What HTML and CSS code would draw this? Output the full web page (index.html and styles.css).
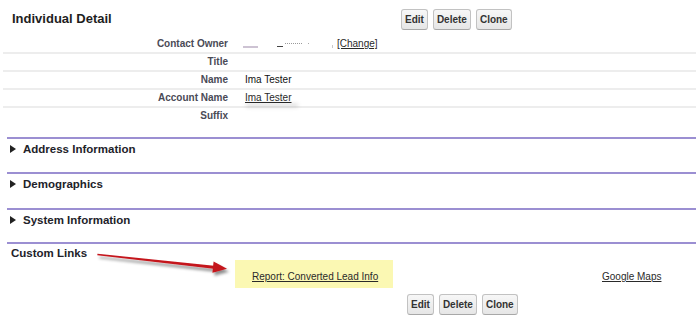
FILE: index.html
```html
<!DOCTYPE html>
<html lang="en">
<head>
<meta charset="utf-8">
<title>Individual Detail</title>
<link rel="stylesheet" href="styles.css">
</head>
<body>
<div class="page">
  <div class="pb-header">
    <h2 class="pb-title">Individual Detail</h2>
    <div class="btns">
      <button class="btn">Edit</button>
      <button class="btn">Delete</button>
      <button class="btn">Clone</button>
    </div>
  </div>

  <div class="detail">
    <div class="row">
      <div class="label">Contact Owner</div>
      <div class="value owner">
        <span class="rd rd1"></span><span class="rd rd2"></span><span class="rd rd3"></span><span class="rd rd4"></span><span class="rd rd5"></span><a class="lnk change" href="#">[Change]</a>
      </div>
    </div>
    <div class="row">
      <div class="label">Title</div>
      <div class="value"></div>
    </div>
    <div class="row">
      <div class="label">Name</div>
      <div class="value">Ima Tester</div>
    </div>
    <div class="row">
      <div class="label">Account Name</div>
      <div class="value"><a class="lnk acct" href="#">Ima Tester</a></div>
    </div>
    <div class="row last">
      <div class="label">Suffix</div>
      <div class="value"></div>
    </div>
  </div>

  <div class="section s1">
    <div class="sec-head"><span class="twist"></span>Address Information</div>
  </div>
  <div class="section s2">
    <div class="sec-head"><span class="twist"></span>Demographics</div>
  </div>
  <div class="section s3">
    <div class="sec-head"><span class="twist"></span>System Information</div>
  </div>

  <div class="custom">
    <div class="sec-title">Custom Links</div>
    <div class="links">
      <span class="hl"><a class="lnk" href="#">Report: Converted Lead Info</a></span>
      <span class="gmaps"><a class="lnk" href="#">Google Maps</a></span>
    </div>
    <div class="btns bottom">
      <button class="btn">Edit</button>
      <button class="btn">Delete</button>
      <button class="btn">Clone</button>
    </div>
    <svg class="arrow" width="150" height="40" viewBox="90 244.5 150 40" aria-hidden="true">
      <defs>
        <filter id="sh" x="-20%" y="-50%" width="140%" height="200%">
          <feDropShadow dx="2" dy="3" stdDeviation="1.6" flood-color="#000" flood-opacity="0.45"/>
        </filter>
      </defs>
      <g filter="url(#sh)" fill="#c4141b">
        <polygon points="97.5,255.2 214,267.2 213.6,270.2 97.3,256.8"/>
        <polygon points="213.6,263 227,270.2 212.4,274.2"/>
      </g>
    </svg>
  </div>
</div>
</body>
</html>
```

FILE: styles.css
```css
* { box-sizing: border-box; }

html, body {
  margin: 0;
  padding: 0;
  background: #ffffff;
}

body {
  font-family: "Liberation Sans", Arial, sans-serif;
  color: #000;
}

.page {
  width: 696px;
  height: 331px;
  overflow: hidden;
}

/* header */
.pb-header {
  display: flex;
  align-items: center;
  padding-top: 9px;
}

.pb-title {
  width: 401px;
  margin: 0;
  padding-left: 12px;
  font-size: 13px;
  font-weight: bold;
  line-height: 19px;
  color: #1e1e1e;
  align-self: flex-start;
}

.btns {
  display: flex;
  gap: 5px;
}

.btn {
  height: 21px;
  padding: 0 3px;
  margin: 0;
  font-family: "Liberation Sans", Arial, sans-serif;
  font-size: 10px;
  font-weight: bold;
  color: #333;
  background: linear-gradient(#f7f7f7, #e6e6e6);
  border: 1px solid #c2c2c2;
  border-bottom-color: #a8a8a8;
  border-radius: 3px;
  line-height: 19px;
}

/* detail rows */
.detail {
  margin-top: 6px;
  margin-left: 3px;
}

.row {
  display: flex;
  height: 18px;
  border-bottom: 2px solid #ededed;
}

.row.last {
  border-bottom: none;
}

.label {
  width: 225px;
  text-align: right;
  font-size: 10px;
  font-weight: bold;
  color: #4a4a56;
  line-height: 16px;
}

.value {
  padding-left: 17px;
  font-size: 10px;
  line-height: 16px;
  color: #111;
}

.lnk {
  color: #2a2a2a;
  text-decoration: underline;
}

.owner {
  display: flex;
  align-items: center;
}

.rd { display: block; }

.rd1 {
  margin-left: -2px;
  width: 15px;
  height: 2px;
  margin-top: 6px;
  background: #cdc3d3;
}

.rd2 {
  margin-left: 19px;
  width: 6px;
  height: 1px;
  margin-top: 4px;
  background: #444;
}

.rd3 {
  margin-left: 2px;
  width: 17px;
  height: 1px;
  margin-bottom: 2px;
  background: repeating-linear-gradient(90deg, #9a9a9a 0 1px, transparent 1px 2px);
}

.rd4 {
  margin-left: 6px;
  width: 1px;
  height: 1px;
  margin-bottom: 2px;
  background: #aaa;
}

.rd5 {
  margin-left: 23px;
  width: 1px;
  height: 3px;
  margin-top: 4px;
  background: #c8c8c8;
}

.change {
  margin-left: 4px;
}

.acct {
  position: relative;
}

.acct::after {
  content: "";
  position: absolute;
  left: 1px;
  right: -6px;
  bottom: -4px;
  height: 3px;
  background: rgba(0, 0, 0, 0.16);
  filter: blur(2px);
}

/* collapsible sections */
.section {
  margin-left: 7px;
  border-top: 2px solid #9b8fd2;
  height: 34.5px;
}

.section.s1 {
  margin-top: 11px;
}

.section.s2 {
  height: 36.4px;
}

.sec-head {
  display: flex;
  align-items: center;
  padding-top: 3px;
  padding-left: 3px;
  font-size: 11.5px;
  font-weight: bold;
  line-height: 14px;
  color: #222229;
}

.twist {
  display: block;
  width: 0;
  height: 0;
  border-left: 6px solid #222;
  border-top: 4px solid transparent;
  border-bottom: 4px solid transparent;
  margin-right: 7px;
}

/* custom links */
.custom {
  position: relative;
  margin-left: 7px;
  border-top: 2px solid #9b8fd2;
  padding-top: 2px;
}

.sec-title {
  padding-left: 4px;
  font-size: 11.5px;
  font-weight: bold;
  line-height: 14px;
  color: #222229;
}

.links {
  display: flex;
  font-size: 10px;
  line-height: 12px;
}

.hl {
  margin-left: 228px;
  width: 158px;
  height: 28px;
  padding: 11px 0 0 17px;
  background: #fbf8b3;
}

.gmaps {
  margin-left: 209px;
  padding-top: 11px;
}

.btns.bottom {
  margin-top: 6px;
  padding-left: 400px;
}

.arrow {
  position: absolute;
  left: 83px;
  top: -1px;
}
```
